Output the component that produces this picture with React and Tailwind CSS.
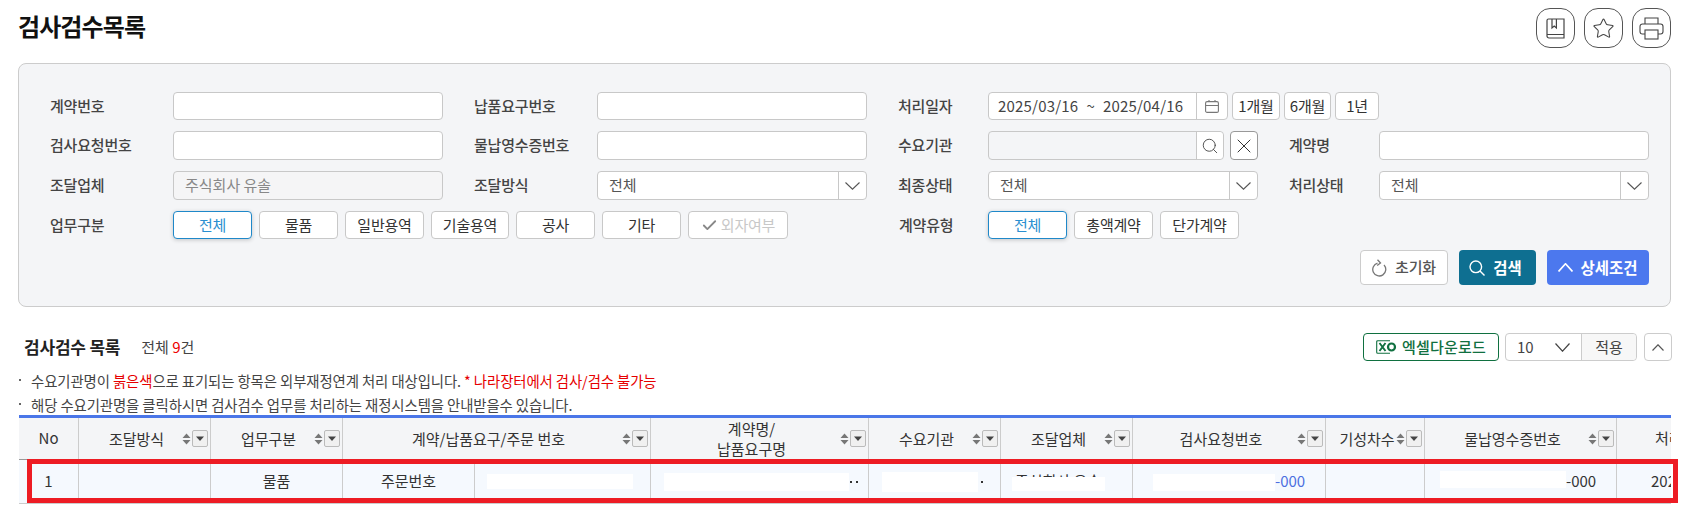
import React from "react";
import { Search, Star, X, Check } from "lucide-react";

// wide thin chevron used by the selects
const Chevron = ({ up, w = 15, h = 8, sw = 1.1, color = "#555" }) => (
  <svg width={w} height={h} viewBox={`0 0 ${w} ${h}`} fill="none" stroke={color} strokeWidth={sw} className="shrink-0">
    <path d={up ? `M0.5 ${h - 0.5}L${w / 2} 0.8L${w - 0.5} ${h - 0.5}` : `M0.5 0.5L${w / 2} ${h - 0.8}L${w - 0.5} 0.5`} />
  </svg>
);

const Label = ({ className = "", children }) => (
  <div className={`shrink-0 text-[15px] font-medium tracking-[-0.2px] text-[#444] ${className}`}>{children}</div>
);

const Input = () => <div className="h-full w-[270px] rounded-[4px] border border-[#c8c8c8] bg-white" />;

const Select = ({ className = "w-[270px]" }) => (
  <div className={`flex h-full items-center rounded-[4px] border border-[#c8c8c8] bg-white ${className}`}>
    <span className="flex-1 pl-[11px] text-[15px] text-[#555]">전체</span>
    <span className="flex h-full w-[28px] items-center justify-center border-l border-[#c8c8c8]">
      <Chevron />
    </span>
  </div>
);

const Btn = ({ active, className = "w-[79px]", children }) => (
  <button
    className={`flex h-full shrink-0 items-center justify-center rounded-[4px] border bg-white text-[15px] tracking-[-0.2px] ${
      active
        ? "border-[#1f88c9] text-[#2a8fd0] shadow-[0_1px_4px_rgba(0,0,0,0.2)]"
        : "border-[#c8c8c8] text-[#333]"
    } ${className}`}
  >
    {children}
  </button>
);

const RoundIcon = ({ children }) => (
  <button className="flex h-[40px] w-[39px] items-center justify-center rounded-[14px] border border-[#555] bg-white text-[#444]">
    {children}
  </button>
);

// header cell with sort arrows and filter button
const Th = ({ children, colSpan }) => (
  <th colSpan={colSpan} className="h-[42px] border-r border-b border-r-[#ccc] border-b-[#999] bg-[#f4f5f7] p-0 text-[15px] leading-[20px] font-normal text-[#333]">
    <div className="flex items-center pr-[2px] pl-[12px]">
      <span className="flex-1 text-center">{children}</span>
      <svg width="9" height="12" viewBox="0 0 9 12" className="mr-[1px] shrink-0">
        <path d="M4.500 0.500L8.500 5H0.500z M4.500 11.500L0.500 7H8.500z" fill="#777" />
      </svg>
      <span className="flex h-[17px] w-[16px] shrink-0 items-center justify-center rounded-[2px] border border-[#bbb] bg-[#f0f0f0]">
        <svg width="8" height="5" viewBox="0 0 8 5">
          <path d="M0 0.500H8L4 5z" fill="#444" />
        </svg>
      </span>
    </div>
  </th>
);

const Td = ({ className = "", children }) => (
  <td className={`h-[44px] overflow-hidden border-r border-b border-[#ccc] bg-[#f5f9fe] p-0 text-[15px] whitespace-nowrap text-[#333] ${className}`}>
    {children}
  </td>
);

const App = () => {
  return (
    <div className="h-[506px] w-[1692px] overflow-hidden bg-white [font-family:'Noto_Sans_CJK_KR','Noto_Sans',sans-serif]">
      {/* Title */}
      <div className="flex h-[48px] items-start justify-between pt-[8px] pr-[21px] pl-[18px]">
        <h1 className="text-[24px] leading-[36px] font-bold tracking-[-0.9px] text-[#111]">검사검수목록</h1>
        <div className="flex gap-[9px]">
          <RoundIcon>
            <svg width="19" height="21" viewBox="0 0 19 21" fill="none" stroke="currentColor" strokeWidth="1.2">
              <path d="M1 17V2.500A1.500 1.500 0 0 1 2.500 1H18V20H3a2 2 0 0 1-2-2z" />
              <path d="M1 16.500h17M6 1v9l2.200-2 2.200 2V1" />
            </svg>
          </RoundIcon>
          <RoundIcon>
            <Star size={23} strokeWidth={1.1} />
          </RoundIcon>
          <RoundIcon>
            <svg width="25" height="23" viewBox="0 0 25 23" fill="none" stroke="currentColor" strokeWidth="1.1">
              <path d="M6 7V1h13v6" />
              <path d="M6 17H3.500A2.500 2.500 0 0 1 1 14.500V9.500A2.500 2.500 0 0 1 3.500 7h18A2.500 2.500 0 0 1 24 9.500v5a2.500 2.500 0 0 1-2.500 2.500H19" />
              <rect x="6" y="13" width="13" height="9" />
            </svg>
          </RoundIcon>
        </div>
      </div>

      {/* Search panel */}
      <div className="mt-[15px] ml-[18px] flex h-[244px] w-[1653px] flex-col gap-[11px] rounded-[8px] border border-[#ccc] bg-[#f4f5f7] pt-[28px] pr-[21px] pl-[31px]">
        <div className="flex h-[28px] items-center">
          <Label className="w-[123px]">계약번호</Label>
          <Input />
          <Label className="ml-[31px] w-[123px]">납품요구번호</Label>
          <Input />
          <Label className="ml-[31px] w-[90px]">처리일자</Label>
          <div className="flex h-full w-[240px] items-center rounded-[4px] border border-[#c8c8c8] bg-white">
            <span className="flex flex-1 items-center gap-[8px] pl-[9px] text-[15px] tracking-[0.2px] whitespace-nowrap text-[#444]">
              <span>2025/03/16</span>
              <span>~</span>
              <span>2025/04/16</span>
            </span>
            <span className="flex h-full w-[31px] items-center justify-center border-l border-[#c8c8c8]">
              <svg width="14" height="13" viewBox="0 0 14 13" fill="none" stroke="#777" strokeWidth="1.1">
                <rect x="0.600" y="1.600" width="12.800" height="10.800" rx="1.500" />
                <path d="M0.600 5.500h12.800M4 0v2M10 0v2" />
              </svg>
            </span>
          </div>
          <div className="ml-[4px] flex h-full gap-[4px]">
            <Btn className="w-[48px]">1개월</Btn>
            <Btn className="w-[47px]">6개월</Btn>
            <Btn className="w-[44px]">1년</Btn>
          </div>
        </div>

        <div className="flex h-[29px] items-center">
          <Label className="w-[123px]">검사요청번호</Label>
          <Input />
          <Label className="ml-[31px] w-[123px]">물납영수증번호</Label>
          <Input />
          <Label className="ml-[31px] w-[90px]">수요기관</Label>
          <div className="flex h-full w-[236px] items-center justify-end rounded-[4px] border border-[#c8c8c8] bg-[#f4f5f7]">
            <span className="flex h-full w-[27px] items-center justify-center rounded-r-[4px] border-l border-[#c8c8c8] bg-white">
              <Search size={18} strokeWidth={1.2} className="text-[#444]" />
            </span>
          </div>
          <button className="ml-[6px] flex h-full w-[28px] items-center justify-center rounded-[4px] border border-[#999] bg-white">
            <X size={24} strokeWidth={1} className="text-[#333]" />
          </button>
          <Label className="ml-[31px] w-[90px]">계약명</Label>
          <Input />
        </div>

        <div className="flex h-[29px] items-center">
          <Label className="w-[123px]">조달업체</Label>
          <div className="flex h-full w-[270px] items-center rounded-[4px] border border-[#c8c8c8] bg-[#f5f5f6] pl-[11px] text-[15px] text-[#888]">
            주식회사 유솔
          </div>
          <Label className="ml-[31px] w-[123px]">조달방식</Label>
          <Select />
          <Label className="ml-[31px] w-[90px]">최종상태</Label>
          <Select />
          <Label className="ml-[31px] w-[90px]">처리상태</Label>
          <Select />
        </div>

        <div className="flex h-[28px] items-center">
          <Label className="w-[123px]">업무구분</Label>
          <div className="flex h-full gap-[7px]">
            <Btn active>전체</Btn>
            <Btn>물품</Btn>
            <Btn>일반용역</Btn>
            <Btn className="w-[78px]">기술용역</Btn>
            <Btn>공사</Btn>
            <Btn>기타</Btn>
            <Btn className="w-[100px] gap-[3px] !text-[#c8c8c8]">
              <Check size={17} strokeWidth={2.6} className="text-[#888]" />
              외자여부
            </Btn>
          </div>
          <Label className="ml-[111px] w-[89px]">계약유형</Label>
          <div className="flex h-full gap-[7px]">
            <Btn active>전체</Btn>
            <Btn>총액계약</Btn>
            <Btn>단가계약</Btn>
          </div>
        </div>

        <div className="flex h-[35px] justify-end gap-[11px]">
          <button className="flex h-full w-[88px] items-center justify-center gap-[8px] rounded-[4px] border border-[#ccc] bg-white text-[15px] font-medium tracking-[-0.2px] text-[#555]">
            <svg width="15" height="18" viewBox="0 0 15 18" fill="none" stroke="#777" strokeWidth="1.3">
              <path d="M5.500 4.200A6.500 6.500 0 1 0 12 6" />
              <path d="M5.500 0.800L8.500 4 5.200 6.500" />
            </svg>
            초기화
          </button>
          <button className="flex h-full w-[77px] items-center justify-center gap-[8px] rounded-[4px] bg-[#0e6f91] pr-[4px] text-[15.500px] font-bold text-white">
            <svg width="16" height="16" viewBox="0 0 16 16" fill="none" stroke="white" strokeWidth="1.4">
              <circle cx="6.800" cy="6.800" r="5.800" />
              <path d="M11 11l4.500 4.500" />
            </svg>
            검색
          </button>
          <button className="flex h-full w-[102px] items-center justify-center gap-[7px] rounded-[4px] bg-[#4c78ee] text-[15.500px] font-bold text-white">
            <Chevron up w={15} h={9} sw={1.7} color="white" />
            상세조건
          </button>
        </div>
      </div>

      {/* List header */}
      <div className="mt-[26px] flex h-[28px] items-center pr-[20px] pl-[24px]">
        <h2 className="text-[17px] font-bold tracking-[-0.2px] text-[#222]">검사검수 목록</h2>
        <span className="ml-[21px] text-[15px] text-[#444]">
          전체 <span className="text-[#e00]">9</span>건
        </span>
        <div className="ml-auto flex h-full items-center">
          <button className="flex h-full w-[136px] items-center justify-center gap-[5px] rounded-[4px] border border-[#107040] bg-white text-[15px] font-medium tracking-[0.2px] text-[#107040]">
            <svg width="21" height="14" viewBox="0 0 21 14" fill="none" stroke="#107040">
              <path d="M14 0.700H1.700a1 1 0 0 0-1 1v10.600a1 1 0 0 0 1 1H14" strokeWidth="1.1" />
              <path d="M3.500 3l6 8M9.500 3l-6 8" strokeWidth="1.900" />
              <circle cx="15.500" cy="7" r="3.500" strokeWidth="2.200" />
            </svg>
            엑셀다운로드
          </button>
          <div className="ml-[6px] flex h-full w-[132px] rounded-[4px] border border-[#ccc] bg-white">
            <div className="flex w-[75px] items-center justify-between pr-[11px] pl-[11px] text-[15px] text-[#444]">
              10
              <Chevron w={15} h={9} sw={1.2} color="#444" />
            </div>
            <div className="flex flex-1 items-center justify-center rounded-r-[4px] border-l border-[#ccc] bg-[#f7f7f7] text-[15px] text-[#444]">
              적용
            </div>
          </div>
          <button className="ml-[7px] flex h-full w-[28px] items-center justify-center rounded-[4px] border border-[#ccc] bg-white">
            <Chevron up w={12} h={7} sw={1.2} color="#555" />
          </button>
        </div>
      </div>

      {/* Notes */}
      <div className="mt-[8px] h-[46px] pl-[19px] text-[14.400px] leading-[24px] tracking-[-0.1px] text-[#444]">
        <div className="flex items-center">
          <span className="mr-[10px] mb-[3px] h-[2px] w-[2px] bg-[#666]" />
          <span>
            수요기관명이 <span className="text-[#e60000]">붉은색</span>으로 표기되는 항목은 외부재정연계 처리 대상입니다.{" "}
            <span className="text-[#e60000]">* 나라장터에서 검사/검수 불가능</span>
          </span>
        </div>
        <div className="flex items-center">
          <span className="mr-[10px] mb-[3px] h-[2px] w-[2px] bg-[#666]" />
          <span>해당 수요기관명을 클릭하시면 검사검수 업무를 처리하는 재정시스템을 안내받을수 있습니다.</span>
        </div>
      </div>

      {/* Table */}
      <div className="relative ml-[19px] w-[1652px]">
        <div className="overflow-hidden border-t-[3px] border-[#4a76e8]">
          <table className="w-[1652px] table-fixed border-separate border-spacing-0">
            <colgroup>
              <col className="w-[60px]" />
              <col className="w-[132px]" />
              <col className="w-[132px]" />
              <col className="w-[132px]" />
              <col className="w-[176px]" />
              <col className="w-[218px]" />
              <col className="w-[132px]" />
              <col className="w-[132px]" />
              <col className="w-[193px]" />
              <col className="w-[99px]" />
              <col className="w-[192px]" />
              <col className="w-[54px]" />
            </colgroup>
            <thead>
              <tr>
                <th className="h-[42px] border-r border-b border-r-[#ccc] border-b-[#999] bg-[#f4f5f7] p-0 text-[15px] font-normal text-[#333]">No</th>
                <Th>조달방식</Th>
                <Th>업무구분</Th>
                <Th colSpan={2}>계약/납품요구/주문 번호</Th>
                <Th>
                  계약명/
                  <br />
                  납품요구명
                </Th>
                <Th>수요기관</Th>
                <Th>조달업체</Th>
                <Th>검사요청번호</Th>
                <Th>기성차수</Th>
                <Th>물납영수증번호</Th>
                <th className="overflow-hidden border-b border-b-[#999] bg-[#f4f5f7] p-0 pl-[38px] text-left text-[15px] font-normal whitespace-nowrap text-[#333]">처리일자</th>
              </tr>
            </thead>
            <tbody>
              <tr>
                <Td className="text-center">1</Td>
                <Td />
                <Td className="text-center">물품</Td>
                <Td className="text-center">주문번호</Td>
                <Td>
                  <div className="ml-[12px] h-[15px] w-[146px] bg-white" />
                </Td>
                <Td>
                  <div className="flex items-center pl-[13px]">
                    <div className="h-[18px] w-[185px] bg-white" />
                    <span className="ml-[1px] flex gap-[4px]">
                      <span className="h-[2px] w-[2px] bg-[#333]" />
                      <span className="h-[2px] w-[2px] bg-[#333]" />
                    </span>
                  </div>
                </Td>
                <Td>
                  <div className="flex items-center pl-[13px]">
                    <div className="h-[20px] w-[96px] bg-white" />
                    <span className="ml-[3px] h-[2px] w-[2px] bg-[#333]" />
                  </div>
                </Td>
                <Td className="relative">
                  <span className="pl-[14px]">주식회사 유솔</span>
                  <div className="absolute top-[17px] left-[11px] h-[14px] w-[93px] bg-white" />
                </Td>
                <Td>
                  <div className="flex items-center pl-[20px] text-[#4c6fe0]">
                    <div className="mt-[2px] h-[17px] w-[122px] bg-white" />
                    -000
                  </div>
                </Td>
                <Td />
                <Td>
                  <div className="flex items-center pl-[15px]">
                    <div className="mb-[5px] h-[17px] w-[126px] bg-white" />
                    -000
                  </div>
                </Td>
                <td className="h-[44px] overflow-hidden border-b border-[#ccc] bg-[#f5f9fe] p-0 pl-[34px] text-[15px] whitespace-nowrap text-[#333]">2025/04/16</td>
              </tr>
            </tbody>
          </table>
        </div>
        {/* red highlight over the row */}
        <div className="pointer-events-none absolute top-[44px] left-[8px] h-[44px] w-[1651px] border-[5px] border-[#ed1c24]" />
      </div>
    </div>
  );
};

export default App;
